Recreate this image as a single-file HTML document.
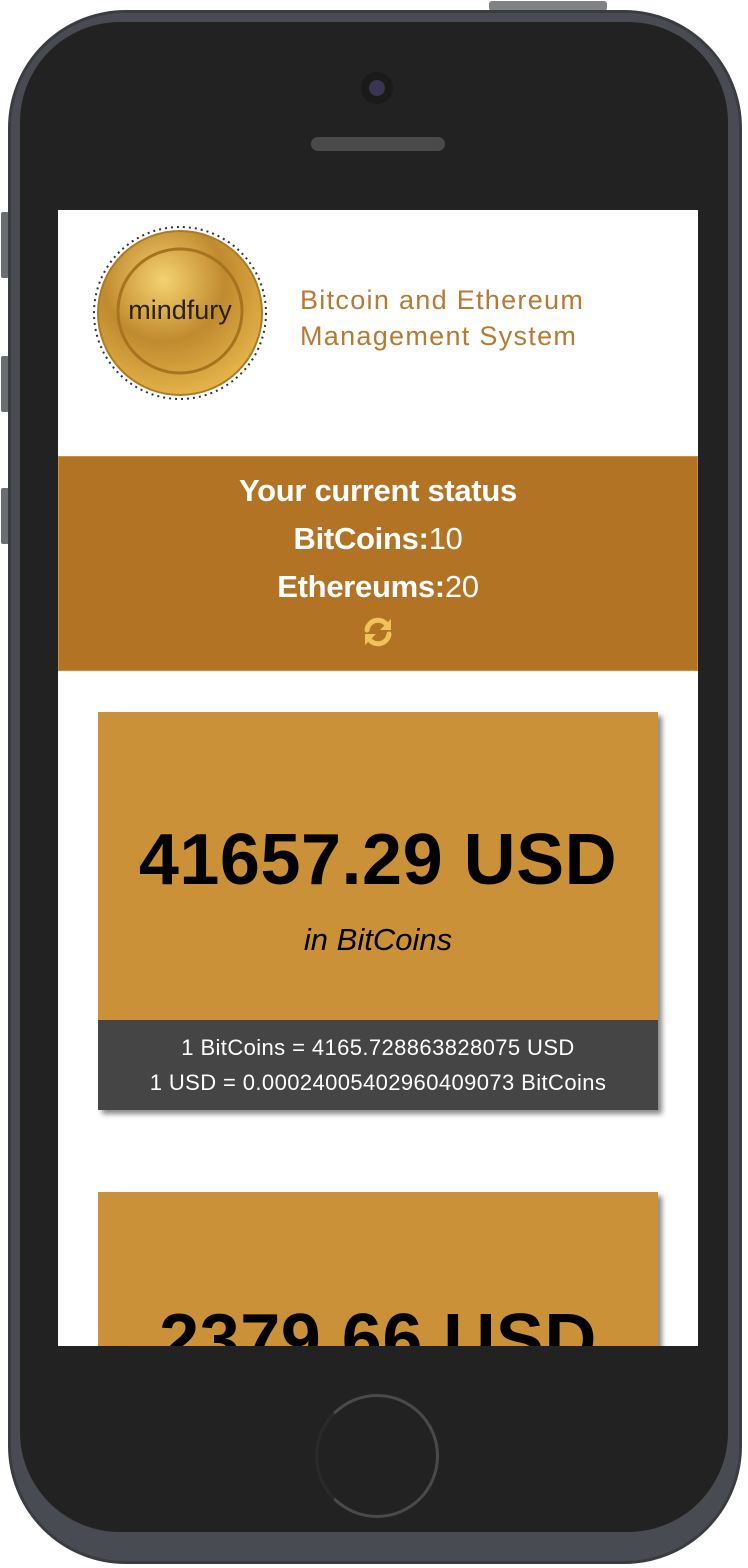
<!DOCTYPE html>
<html><head><style>
*{margin:0;padding:0;box-sizing:border-box}
body{width:748px;height:1568px;background:#fff;position:relative;overflow:hidden;font-family:"Liberation Sans",Arial,sans-serif}
.phone{position:absolute;left:8px;top:10px;width:734px;height:1554px;border-radius:118px;background:#484c52;border:3px solid #3a3d40}
.inner{position:absolute;left:20px;top:22px;width:708px;height:1510px;border-radius:100px;background:#222}
.screen{position:absolute;left:58px;top:210px;width:640px;height:1136px;background:#fff;overflow:hidden}
.btn{position:absolute;background:#6a6d72}
</style></head><body>
<div class="btn" style="left:489px;top:1px;width:118px;height:10px;border-radius:3px;background:#808286"></div>
<div class="btn" style="left:1px;top:212px;width:8px;height:66px;border-radius:2px"></div>
<div class="btn" style="left:1px;top:356px;width:8px;height:56px;border-radius:2px"></div>
<div class="btn" style="left:1px;top:488px;width:8px;height:56px;border-radius:2px"></div>
<div class="phone"></div>
<div class="inner"></div>
<div style="position:absolute;left:361px;top:72px;width:32px;height:32px;border-radius:50%;background:#1a1a1a"></div>
<div style="position:absolute;left:369px;top:80px;width:16px;height:16px;border-radius:50%;background:#3a3550"></div>
<div style="position:absolute;left:311px;top:137px;width:134px;height:14px;border-radius:7px;background:#555;opacity:.8"></div>
<div style="position:absolute;left:315px;top:1394px;width:124px;height:124px;border-radius:50%;border:3px solid #4a4a4a;border-left-color:#2a2a2a"></div>
<div class="screen">
  <svg style="position:absolute;left:32px;top:16px" width="180" height="180" viewBox="0 0 180 180">
    <defs><radialGradient id="g" cx="40%" cy="30%" r="75%"><stop offset="0" stop-color="#f5d271"/><stop offset=".5" stop-color="#c08a2e"/><stop offset="1" stop-color="#e8b84e"/></radialGradient></defs>
    <circle cx="90" cy="87" r="86" fill="none" stroke="#333" stroke-width="2" stroke-dasharray="2 4"/>
    <circle cx="90" cy="87" r="82" fill="url(#g)" stroke="#b07a25" stroke-width="2"/>
    <circle cx="90" cy="85" r="62" fill="none" stroke="#a8731f" stroke-width="3"/>
    <text x="90" y="93" text-anchor="middle" font-family="Liberation Sans,sans-serif" font-size="27" fill="#2a2010">mindfury</text>
  </svg>
  <div style="position:absolute;left:242px;top:72px;color:#b57a33;font-size:27px;line-height:36px;letter-spacing:1.3px">Bitcoin and Ethereum<br>Management System</div>
  <div style="position:absolute;left:0;top:246px;width:640px;height:215px;background:#b27325;border:1px solid #cf8f33;color:#fff;text-align:center;font-size:31px;line-height:48px;padding-top:10px;letter-spacing:-.3px">
    <b>Your current status</b><br><b>BitCoins:</b>10<br><b>Ethereums:</b>20<br>
    <svg width="34" height="34" viewBox="0 0 34 34" style="margin-top:4px"><g fill="none" stroke="#f0c35a" stroke-width="5" stroke-linecap="round"><path d="M6 15a11 11 0 0 1 20-5"/><path d="M28 19a11 11 0 0 1-20 5"/></g><path d="M30 4v11h-11z" fill="#f0c35a"/><path d="M4 30v-11h11z" fill="#f0c35a"/></svg>
  </div>
  <div style="position:absolute;left:40px;top:502px;width:560px;height:398px;background:#cb9138;box-shadow:4px 4px 5px #888">
    <div style="text-align:center;font-size:72px;font-weight:bold;margin-top:108px;line-height:80px;letter-spacing:.5px">41657.29 USD</div>
    <div style="text-align:center;font-size:31px;font-style:italic;margin-top:22px">in BitCoins</div>
    <div style="position:absolute;left:0;bottom:0;width:560px;height:90px;background:#454545;color:#fff;text-align:center;font-size:22px;line-height:35px;padding-top:10px;letter-spacing:.4px">1 BitCoins = 4165.728863828075 USD<br>1 USD = 0.00024005402960409073 BitCoins</div>
  </div>
  <div style="position:absolute;left:40px;top:982px;width:560px;height:398px;background:#cb9138;box-shadow:4px 4px 5px #888">
    <div style="text-align:center;font-size:72px;font-weight:bold;margin-top:108px;line-height:80px;letter-spacing:.5px">2379.66 USD</div>
  </div>
</div>
</body></html>
